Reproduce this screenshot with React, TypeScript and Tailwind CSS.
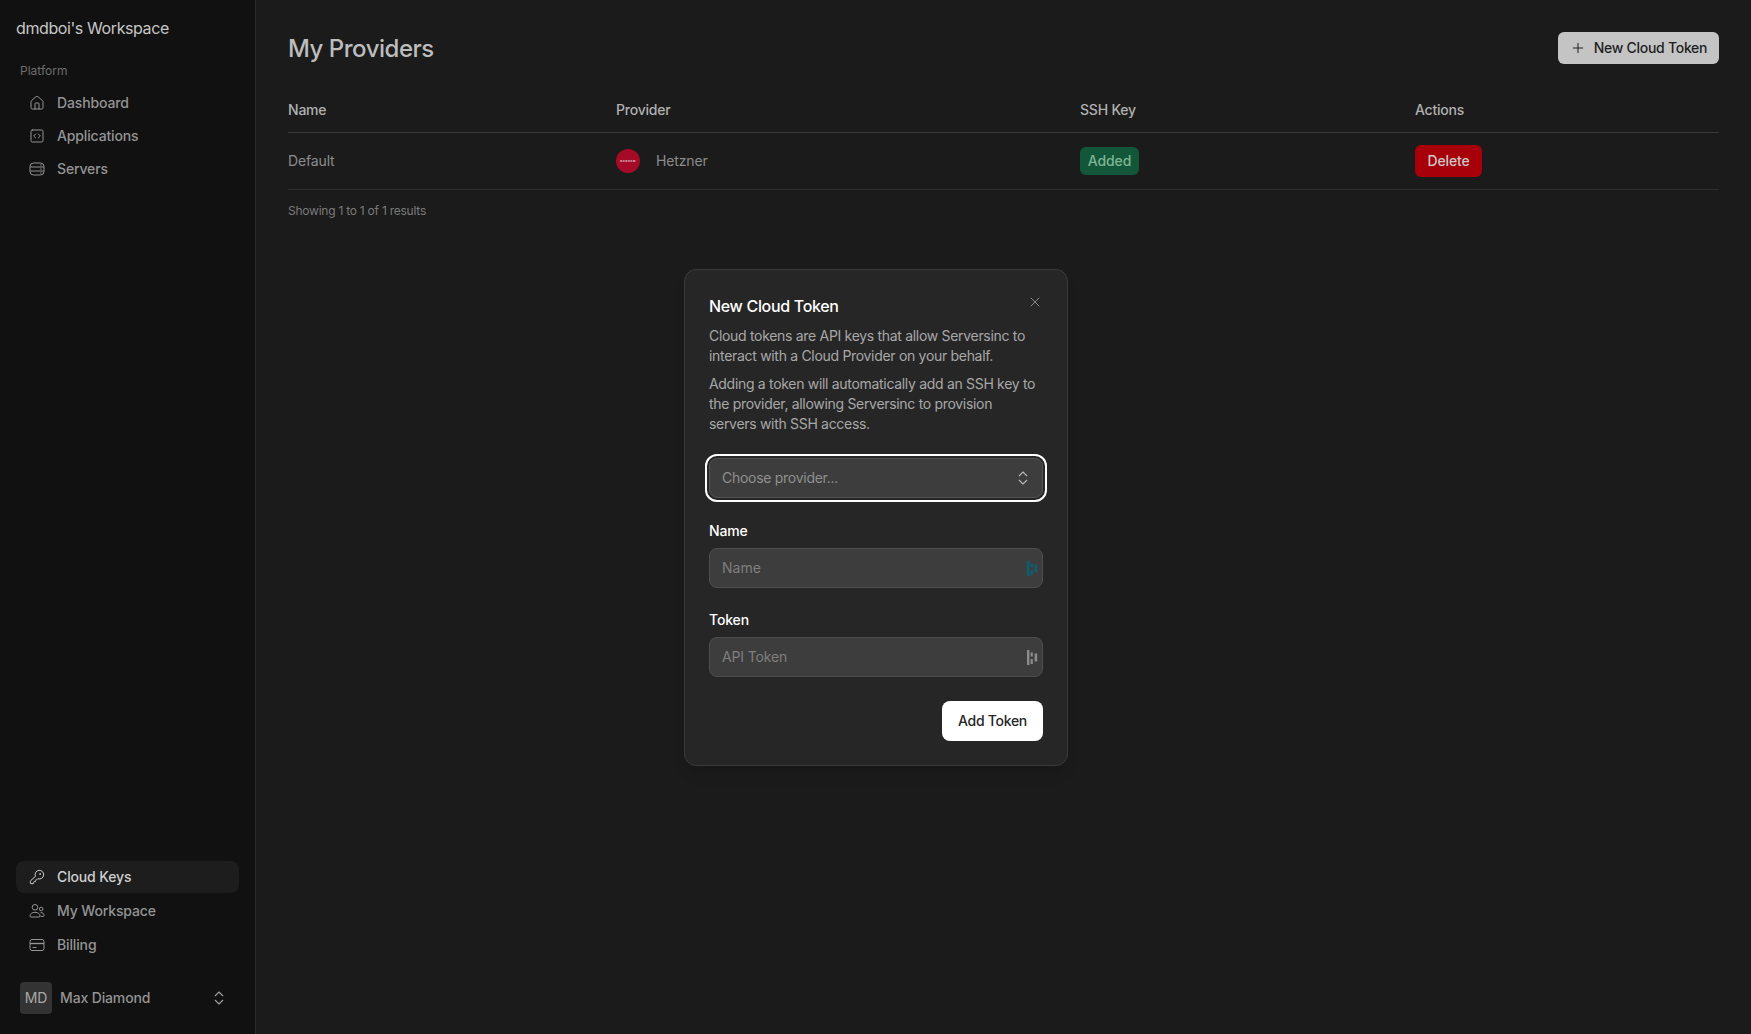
import React from "react";
import { House, SquareCode, KeyRound, ChevronsUpDown, Plus, X } from "lucide-react";

function NavItem({ icon, label, active }: { icon: React.ReactNode; label: string; active?: boolean }) {
  return (
    <div className={active ? "flex h-8 items-center gap-3 rounded-lg bg-[#1d1d1d] pl-[13px] text-sm font-medium tracking-[-0.01em] text-[#cfcfcf]" : "flex h-8 items-center gap-3 rounded-lg pl-[13px] text-sm font-medium tracking-[-0.01em] text-[#949494]"}>
      {icon}
      <span>{label}</span>
    </div>
  );
}

function ServerStack() {
  return (
    <svg className="h-4 w-4 shrink-0" viewBox="0 0 16 16" fill="none" stroke="currentColor" strokeWidth="1" aria-hidden="true">
      <rect x="1" y="2" width="14" height="12" rx="3.5" />
      <path d="M1.2 6h13.6M1.2 10h13.6" />
      <path d="M11 4h2M11 8h2M11 12h2" strokeDasharray="0.8 0.6" />
    </svg>
  );
}

function TwoUsers() {
  return (
    <svg className="h-4 w-4 shrink-0" viewBox="0 0 16 16" fill="none" stroke="currentColor" strokeWidth="1" aria-hidden="true">
      <circle cx="6" cy="4.3" r="2.8" />
      <circle cx="12.2" cy="6" r="1.8" />
      <path d="M1 13c0-2.3 2.2-3.7 5-3.7s5 1.4 5 3.7c0 .6-.4 1-1 1H2c-.6 0-1-.4-1-1z" />
      <path d="M11.6 9.6c2 0 3.5 1 3.5 2.8 0 .6-.4 1-1 1h-2.4" />
    </svg>
  );
}

function Card() {
  return (
    <svg className="h-4 w-4 shrink-0" viewBox="0 0 16 16" fill="none" stroke="currentColor" strokeWidth="1" aria-hidden="true">
      <rect x="1" y="2.5" width="14" height="11" rx="2" />
      <path d="M1 6.5h14" strokeWidth="1.4" />
      <path d="M3.5 10.5h4" />
    </svg>
  );
}

function PassIcon({ color }: { color: string }) {
  return (
    <svg className="absolute right-[4px] top-[12px]" width="11" height="15" viewBox="0 0 11 15" aria-hidden="true">
      <rect x="0" y="0" width="2.4" height="15" fill={color} />
      <rect x="3.6" y="2.5" width="2.2" height="4" fill={color} />
      <rect x="3.6" y="9" width="2.2" height="5" fill={color} />
      <rect x="7.6" y="3.5" width="2.6" height="8" fill={color} />
    </svg>
  );
}

export default function App() {
  const ic = "h-4 w-4 shrink-0";
  return (
    <div className="relative flex h-screen w-full overflow-hidden bg-[#1b1b1b] font-['Inter',sans-serif]">
      <aside className="flex w-[256px] shrink-0 flex-col border-r border-[#2c2c2c] bg-[#111111] px-4 pb-5 pt-4">
        <div className="text-base leading-6 tracking-[-0.025em] text-[#c6c6c6]">dmdboi's Workspace</div>
        <div className="mt-[23px] px-1 text-xs leading-4 text-[#6e6e6e]">Platform</div>
        <nav className="mt-2 flex flex-col gap-px">
          <NavItem icon={<House className={ic} strokeWidth={1.5} />} label="Dashboard" />
          <NavItem icon={<SquareCode className={ic} strokeWidth={1.5} />} label="Applications" />
          <NavItem icon={<ServerStack />} label="Servers" />
        </nav>
        <nav className="mt-auto flex flex-col gap-[2px]">
          <NavItem active icon={<KeyRound className={ic} strokeWidth={1.5} />} label="Cloud Keys" />
          <NavItem icon={<TwoUsers />} label="My Workspace" />
          <NavItem icon={<Card />} label="Billing" />
        </nav>
        <div className="mt-[21px] flex items-center gap-2 pl-1 pr-[11px]">
          <div className="flex h-8 w-8 items-center justify-center rounded bg-[#333333] text-sm text-[#a8a8a8]">MD</div>
          <span className="text-sm font-medium tracking-[-0.01em] text-[#949494]">Max Diamond</span>
          <ChevronsUpDown className="ml-auto h-[18px] w-[18px] text-[#a0a0a0]" strokeWidth={1.5} />
        </div>
      </aside>

      <main className="min-w-0 flex-1 px-8 pt-8">
        <div className="flex h-8 items-center justify-between">
          <h1 className="pt-[2px] text-2xl font-medium tracking-[-0.02em] text-[#bdbdbd]">My Providers</h1>
          <button className="flex h-8 w-[161px] items-center justify-center gap-2 rounded-md bg-[#c4c4c4] text-sm font-medium tracking-[-0.02em] text-[#1e1e1e]">
            <Plus className="h-4 w-4" strokeWidth={1.5} />
            New Cloud Token
          </button>
        </div>
        <div className="mt-[28px] grid h-[41px] grid-cols-[328px_464px_335px_1fr] items-center border-b border-[#3a3a3a] pb-[4px] text-sm font-medium tracking-[-0.015em] text-[#b0b0b0]">
          <div>Name</div>
          <div>Provider</div>
          <div>SSH Key</div>
          <div>Actions</div>
        </div>
        <div className="grid h-[57px] grid-cols-[328px_464px_335px_1fr] items-center border-b border-[#2e2e2e] text-sm tracking-[-0.01em] text-[#8c8c8c]">
          <div>Default</div>
          <div className="flex items-center gap-4">
            <svg className="h-6 w-6" viewBox="0 0 24 24" aria-hidden="true">
              <circle cx="12" cy="12" r="12" fill="#a50a26" />
              <path d="M4 12h16" stroke="#d7a0aa" strokeWidth="1.4" strokeDasharray="2 0.6" />
            </svg>
            <span>Hetzner</span>
          </div>
          <div>
            <span className="inline-flex h-7 w-[59px] items-center justify-center rounded-md bg-[#13573a] font-medium text-[#7db592]">Added</span>
          </div>
          <div>
            <button className="flex h-8 w-[67px] items-center justify-center rounded-md bg-[#a8000a] font-medium text-[#c9c9c9]">Delete</button>
          </div>
        </div>
        <div className="mt-[13px] text-xs leading-4 tracking-[-0.02em] text-[#7a7a7a]">Showing 1 to 1 of 1 results</div>
      </main>

      <div className="absolute left-[684px] top-[269px] h-[497px] w-[384px] rounded-xl border border-[#3a3a3a] bg-[#262626] p-6 shadow-lg">
        <X className="absolute right-[24px] top-[24px] h-4 w-4 text-[#8a8a8a]" strokeWidth={1.5} />
        <h2 className="text-base font-medium leading-6 tracking-[-0.02em] text-white">New Cloud Token</h2>
        <p className="mt-2 text-sm leading-5 tracking-[-0.022em] text-[#a8a8a8]">Cloud tokens are API keys that allow Serversinc to interact with a Cloud Provider on your behalf.</p>
        <p className="mt-2 text-sm leading-5 tracking-[-0.022em] text-[#a8a8a8]">Adding a token will automatically add an SSH key to the provider, allowing Serversinc to provision servers with SSH access.</p>
        <div className="mt-[24px] flex h-10 items-center justify-between rounded-lg border border-[#515151] bg-[#3d3d3d] pl-3 pr-[10px] text-sm tracking-[-0.02em] text-[#8f8f8f] outline-2 outline-offset-2 outline-white">
          <span>Choose provider...</span>
          <ChevronsUpDown className="h-[18px] w-[18px] text-[#b5b5b5]" strokeWidth={1.5} />
        </div>
        <label className="mt-[23px] block text-sm font-medium leading-5 tracking-[-0.01em] text-white">Name</label>
        <div className="relative mt-[7px] flex h-10 items-center rounded-lg border border-[#4d4d4d] bg-[#3d3d3d] pl-3 text-sm text-[#7f7f7f]">
          Name
          <PassIcon color="#0a5f75" />
        </div>
        <label className="mt-[22px] block text-sm font-medium leading-5 tracking-[-0.01em] text-white">Token</label>
        <div className="relative mt-[7px] flex h-10 items-center rounded-lg border border-[#4d4d4d] bg-[#3d3d3d] pl-3 text-sm tracking-[-0.01em] text-[#7f7f7f]">
          API Token
          <PassIcon color="#8c8c8c" />
        </div>
        <div className="mt-6 flex justify-end">
          <button className="flex h-10 w-[101px] items-center justify-center rounded-lg bg-white text-sm font-medium tracking-[-0.02em] text-[#262626]">Add Token</button>
        </div>
      </div>
    </div>
  );
}
